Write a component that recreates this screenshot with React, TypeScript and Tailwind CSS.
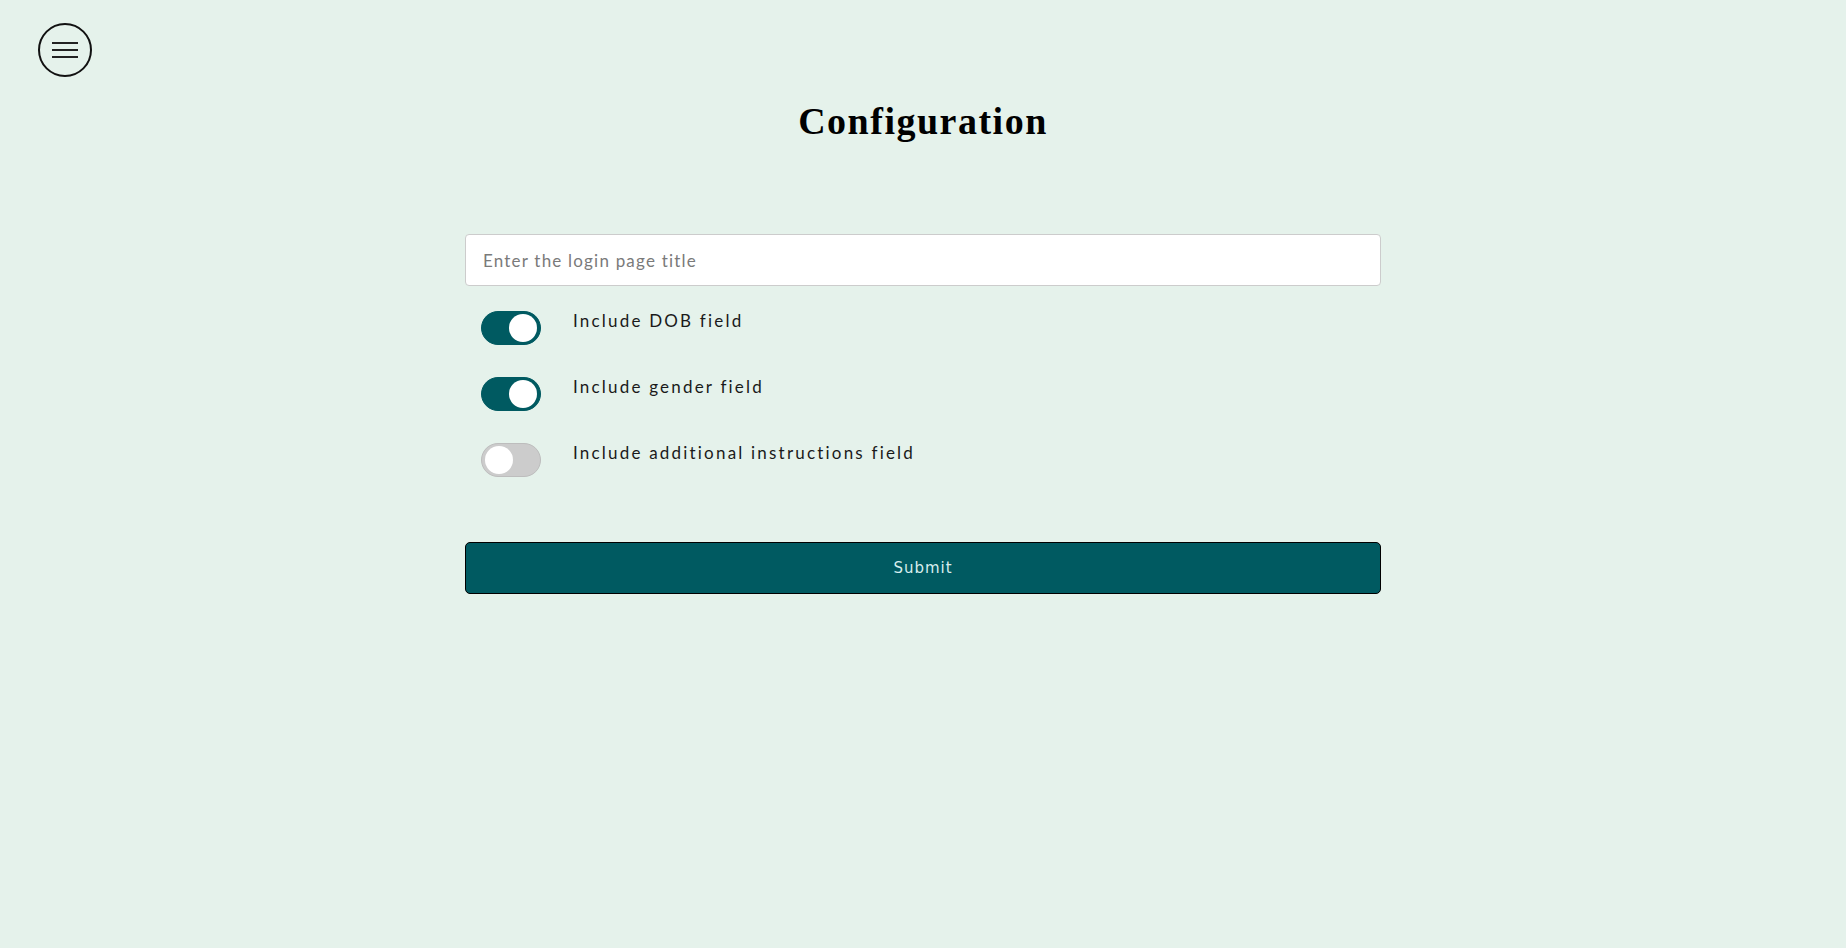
import React, { useState } from 'react'

function Toggle({ on, onClick }: { on: boolean; onClick: () => void }) {
    return (
        <button
            type="button"
            onClick={onClick}
            className={`relative h-[34px] w-[60px] shrink-0 rounded-full border ${on ? 'border-[#005a61] bg-[#005a61]' : 'border-[#bdbdbd] bg-[#cccccc]'}`}
        >
            <span
                className={`absolute top-[2px] h-[28px] w-[28px] rounded-full bg-white ${on ? 'left-[27px]' : 'left-[3px]'}`}
            />
        </button>
    )
}

export default function App() {
    const [fields, setFields] = useState([
        { label: 'Include DOB field', on: true },
        { label: 'Include gender field', on: true },
        { label: 'Include additional instructions field', on: false },
    ])

    const flip = (i: number) =>
        setFields(fields.map((f, j) => (j === i ? { ...f, on: !f.on } : f)))

    return (
        <div className="min-h-screen bg-[#e5f2eb] font-['Lato',sans-serif]">
            {/* Menu button */}
            <div className="pl-[38px] pt-[23px]">
                <button className="flex h-[54px] w-[54px] items-center justify-center rounded-full border-2 border-[#111]">
                    <span className="flex w-[26px] flex-col gap-[5px]">
                        <span className="h-[2px] bg-[#222]" />
                        <span className="h-[2px] bg-[#222]" />
                        <span className="h-[2px] bg-[#222]" />
                    </span>
                </button>
            </div>

            <h1 className="mt-[20px] text-center font-['Liberation_Serif',serif] text-[38px] font-black leading-[48px] tracking-[1.5px] text-black">
                Configuration
            </h1>

            <div className="mx-auto mt-[89px] w-[916px]">
                <input
                    type="text"
                    placeholder="Enter the login page title"
                    className="h-[52px] w-full rounded-[4px] border border-[#cccccc] bg-white px-[17px] text-[17px] tracking-[1.2px] text-[#333] placeholder:text-[#7a7a7a] focus:outline-none"
                />

                <div className="mt-[25px] flex flex-col gap-[32px] pl-[16px]">
                    {fields.map((f, i) => (
                        <div key={f.label} className="flex items-start gap-[32px]">
                            <Toggle on={f.on} onClick={() => flip(i)} />
                            <span className="text-[17px] leading-[20px] tracking-[2.2px] text-[#1a1a1a]">
                                {f.label}
                            </span>
                        </div>
                    ))}
                </div>

                <button className="mt-[65px] h-[52px] w-full rounded-[5px] border border-black bg-[#005a61] font-['DejaVu_Sans',sans-serif] text-[15px] tracking-[1px] text-[#d8eeee]">
                    Submit
                </button>
            </div>
        </div>
    )
}
